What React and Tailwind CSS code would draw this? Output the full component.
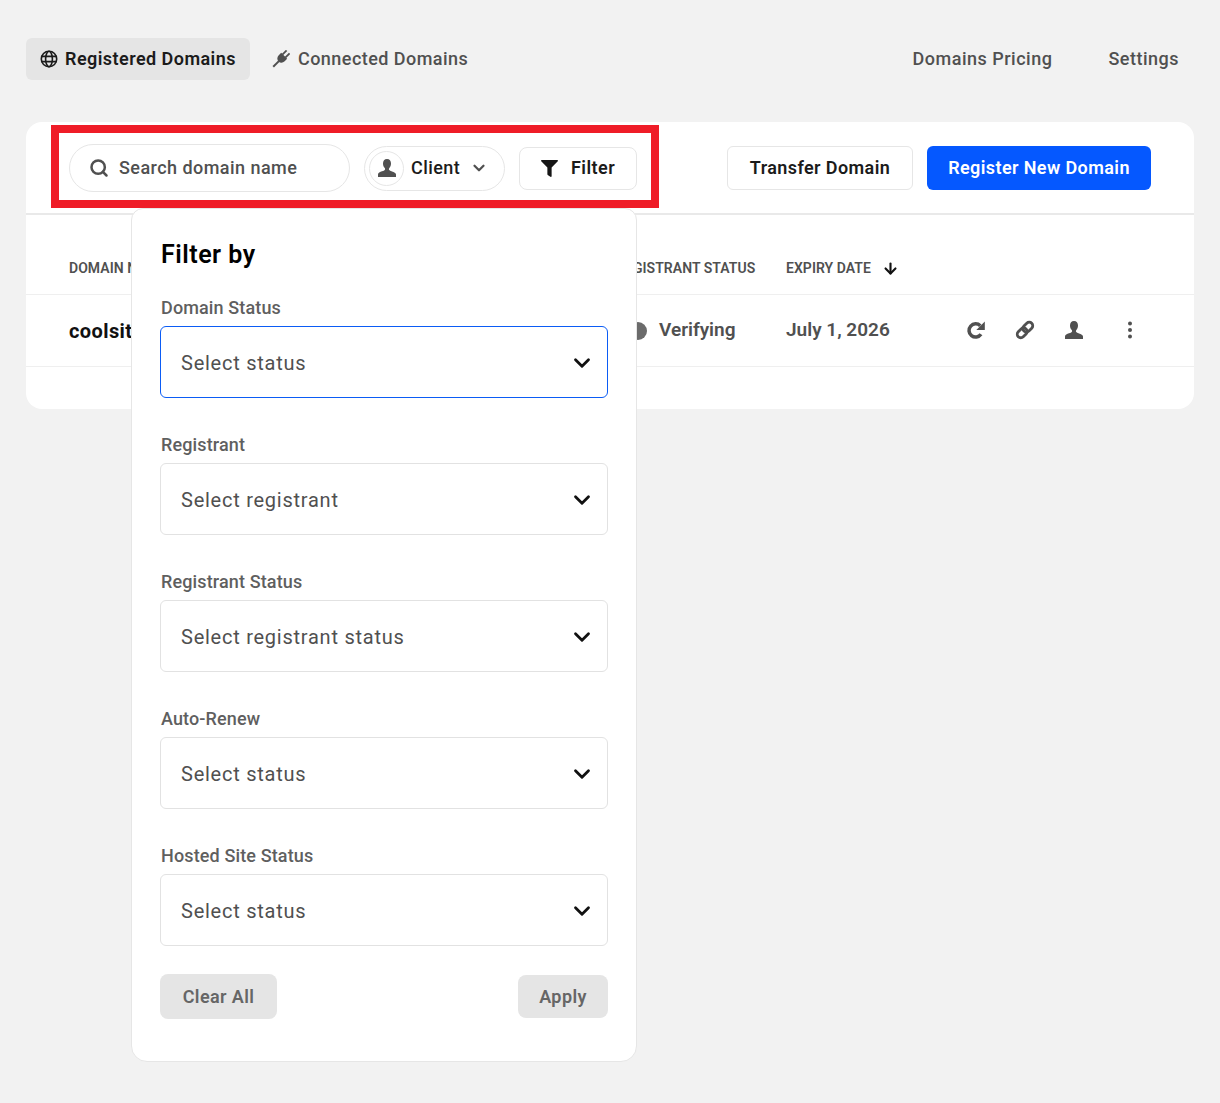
import React from "react";
import { ChevronDown, Search, ArrowDown } from "lucide-react";
import { FaFilter } from "react-icons/fa";

function Person({ size = 20, className = "" }) {
  return (
    <svg width={size} height={size} viewBox="0 0 20 20" className={className} fill="currentColor">
      <path d="M10 1C7.400 1 6 3 6 5.400c0 1.900.8 3.600 1.800 4.700.4.500.4 1.300 0 1.800-.4.500-1.300.8-2.800 1.400C3 14 1 14.800 1 16.500V19h18v-2.500c0-1.700-2-2.500-4-3.100-1.500-.6-2.400-.9-2.800-1.400-.4-.5-.4-1.300 0-1.800C13.200 9 14 7.300 14 5.400 14 3 12.600 1 10 1z" />
    </svg>
  );
}

function Globe() {
  return (
    <svg width="18" height="18" viewBox="0 0 18 18" fill="none" stroke="#1b1b1b" strokeWidth="1.600">
      <circle cx="9" cy="9" r="7.700" />
      <ellipse cx="9" cy="9" rx="3.400" ry="7.700" />
      <path d="M1.500 6.400h15M1.500 11.600h15" />
    </svg>
  );
}

function Plug() {
  return (
    <svg width="18" height="18" viewBox="0 0 18 18" fill="#505050">
      <g transform="rotate(45 9 9)">
        <rect x="6" y="-1" width="1.800" height="6" />
        <rect x="10.200" y="-1" width="1.800" height="6" />
        <path d="M4.800 4.500h8.400v3.500c0 2.600-1.900 4.500-4.200 4.500S4.800 10.600 4.800 8z" />
        <rect x="8" y="12" width="2" height="8" />
      </g>
    </svg>
  );
}

function Refresh() {
  return (
    <svg width="20" height="20" viewBox="0 0 20 20" fill="none" className="mb-[2px]">
      <path d="M15 14.300A6.600 6.600 0 1 1 14.300 5.800" stroke="#505050" strokeWidth="3.500" />
      <polygon points="18.800,1.500 18.800,10 10.300,10" fill="#505050" />
    </svg>
  );
}

function ChainLink() {
  return (
    <svg width="20" height="20" viewBox="0 0 20 20" fill="none" stroke="#505050" strokeWidth="2.800" className="mb-[2px]">
      <g transform="rotate(-45 10 10)">
        <rect x="0.500" y="6.500" width="11" height="7" rx="3.500" />
        <rect x="8.500" y="6.500" width="11" height="7" rx="3.500" />
      </g>
    </svg>
  );
}

function SelectField({ label, placeholder, focused, className = "" }) {
  return (
    <div className={className}>
      <div className="pl-[1px] text-[18px] leading-[24px] font-medium text-[#5f5f5f] tracking-[0.13px]">{label}</div>
      <div
        className={`mt-[6px] h-[72px] rounded-[6px] border flex items-center justify-between pl-[20px] pr-[12px] ${
          focused ? "border-[#0b5cf5]" : "border-[#e2e2e2]"
        }`}
      >
        <span className="pt-[2px] text-[20px] text-[#505050] tracking-[0.75px]">{placeholder}</span>
        <ChevronDown size={26} strokeWidth={2.600} className="mt-[1px] text-[#111]" />
      </div>
    </div>
  );
}

export default function App() {
  return (
    <div className="relative min-h-[1103px] bg-[#f2f2f2] font-['Roboto',sans-serif] px-[26px] pt-[38px]">
      <nav className="flex items-center h-[42px]">
        <div className="flex items-center h-[42px] w-[224px] rounded-[6px] bg-[#e5e5e5] pl-[14px] gap-[7px] text-[18px] font-semibold tracking-[0.45px] text-[#1b1b1b]">
          <Globe />
          <span className="pb-[2px]">Registered Domains</span>
        </div>
        <div className="flex items-center ml-[22px] gap-[8px] text-[18px] font-medium tracking-[0.45px] text-[#505050]">
          <Plug />
          <span className="pb-[2px]">Connected Domains</span>
        </div>
        <div className="ml-auto flex items-center gap-[56px] pr-[15px] pb-[2px] text-[18px] font-medium tracking-[0.5px] text-[#505050]">
          <span>Domains Pricing</span>
          <span>Settings</span>
        </div>
      </nav>

      <div className="mt-[42px] h-[287px] bg-white rounded-[16px]">
        <div className="h-[93px] border-b-2 border-[#e9e9e9] flex items-center pl-[43px] pr-[43px] pt-[1px]">
          <div className="w-[281px] h-[48px] rounded-full border border-[#e6e6e6] flex items-center pl-[19px] gap-[10px]">
            <Search size={20} strokeWidth={3} className="text-[#505050]" />
            <span className="pb-[1px] text-[18px] font-medium tracking-[0.45px] text-[#505050]">Search domain name</span>
          </div>
          <div className="ml-[14px] w-[141px] h-[45px] rounded-full border border-[#e6e6e6] flex items-center pl-[4px]">
            <div className="w-[35px] h-[35px] rounded-full border border-[#e6e6e6] flex items-center justify-center">
              <Person size={20} className="text-[#505050]" />
            </div>
            <span className="pb-[1px] ml-[7px] text-[18px] font-medium tracking-[0.45px] text-[#1b1b1b]">Client</span>
            <ChevronDown size={18} strokeWidth={3} className="ml-[10px] text-[#505050]" />
          </div>
          <div className="ml-[14px] w-[118px] h-[43px] rounded-[8px] border border-[#e6e6e6] flex items-center pl-[21px] gap-[13px]">
            <FaFilter size={17} className="text-[#161616]" />
            <span className="pb-[1px] text-[18px] font-semibold tracking-[0.45px] text-[#1b1b1b]">Filter</span>
          </div>
          <div className="ml-auto w-[186px] h-[44px] rounded-[6px] border border-[#e6e6e6] flex items-center justify-center pb-[1px] text-[18px] font-semibold tracking-[0.4px] text-[#1b1b1b]">
            Transfer Domain
          </div>
          <div className="ml-[14px] w-[224px] h-[44px] rounded-[6px] bg-[#0558ff] flex items-center justify-center pb-[1px] text-[18px] font-semibold tracking-[0.4px] text-white">
            Register New Domain
          </div>
        </div>

        <div className="h-[80px] border-b border-[#efefef] flex items-end pb-[16px] text-[14px] font-semibold tracking-[0.05px] text-[#505050]">
          <span className="ml-[43px] w-[547px] leading-[20px]">DOMAIN NAME</span>
          <span className="w-[170px] leading-[20px] whitespace-nowrap">REGISTRANT STATUS</span>
          <span className="leading-[20px]">EXPIRY DATE</span>
          <ArrowDown size={17} strokeWidth={3} className="ml-[11px] text-[#111] mb-[1px]" />
        </div>

        <div className="h-[72px] border-b border-[#efefef] flex items-center text-[19px] font-semibold text-[#505050]">
          <span className="ml-[43px] w-[130px] font-bold text-[20px] tracking-[0.4px] text-[#111]">coolsite.com</span>
          <span className="ml-[430px] w-[18px] h-[18px] rounded-full bg-[#6b6b6b]"></span>
          <span className="ml-[12px] w-[127px]">Verifying</span>
          <span className="w-[180px]">July 1, 2026</span>
          <Refresh />
          <span className="ml-[29px]"><ChainLink /></span>
          <Person size={20} className="ml-[29px] mb-[2px] text-[#505050]" />
          <svg width="6" height="18" viewBox="0 0 6 18" fill="#505050" className="ml-[43px] mb-[2px]">
            <circle cx="3" cy="2.500" r="2" />
            <circle cx="3" cy="9" r="2" />
            <circle cx="3" cy="15.500" r="2" />
          </svg>
        </div>
      </div>

      <div className="absolute left-[51px] top-[125px] w-[608px] h-[83px] border-[8px] border-[#ef1c27] pointer-events-none"></div>

      <div className="absolute left-[131px] top-[208px] w-[506px] h-[854px] bg-white border border-[#e6e6e6] rounded-b-[16px] rounded-t-[12px] px-[28px] pt-[30px]">
        <h2 className="pl-[1px] text-[25px] leading-[32px] font-semibold tracking-[0.5px] text-black">Filter by</h2>
        <SelectField className="mt-[25px]" label="Domain Status" placeholder="Select status" focused />
        <SelectField className="mt-[35px]" label="Registrant" placeholder="Select registrant" />
        <SelectField className="mt-[35px]" label="Registrant Status" placeholder="Select registrant status" />
        <SelectField className="mt-[35px]" label="Auto-Renew" placeholder="Select status" />
        <SelectField className="mt-[35px]" label="Hosted Site Status" placeholder="Select status" />
        <div className="mt-[28px] flex items-center justify-between">
          <div className="w-[117px] h-[45px] rounded-[8px] bg-[#e5e5e5] flex items-center justify-center text-[18px] font-semibold tracking-[0.4px] text-[#666]">Clear All</div>
          <div className="w-[90px] h-[43px] rounded-[8px] bg-[#e5e5e5] flex items-center justify-center text-[18px] font-semibold tracking-[0.4px] text-[#666]">Apply</div>
        </div>
      </div>
    </div>
  );
}
